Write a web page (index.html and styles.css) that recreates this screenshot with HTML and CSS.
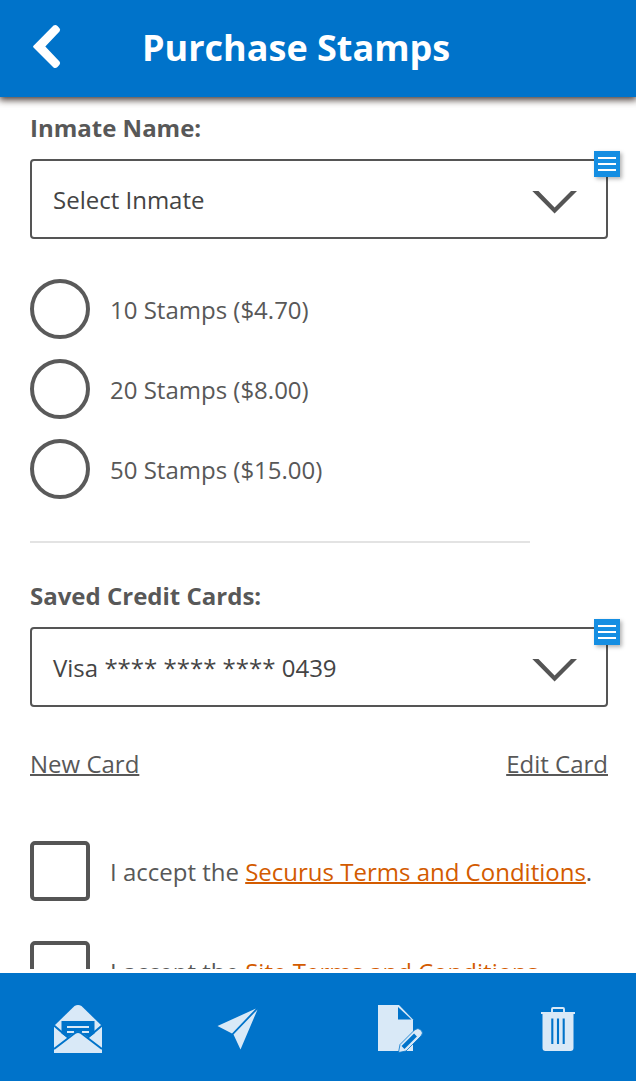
FILE: index.html
```html
<!DOCTYPE html>
<html lang="en">
<head>
<meta charset="utf-8">
<title>Purchase Stamps</title>
<link rel="stylesheet" href="styles.css">
</head>
<body>
<div class="app">
  <header class="header">
    <svg class="back" width="30" height="46" viewBox="0 0 30 46"><path d="M1.500 21.800 21.500 1.600Q23.500 .1 25.500 2L27.500 4.200Q28.800 5.800 27.500 7.400L13.300 22.500 27.500 37.600Q28.800 39.200 27.500 40.800L25.500 43Q23.500 44.900 21.500 43.400L1.500 23.500Q.500 22.700 1.500 21.800Z" fill="#fff"/></svg>
    <h1 class="title">Purchase Stamps</h1>
  </header>
  <main class="content">
    <div class="label">Inmate Name:</div>
    <div class="select">
      <span class="value">Select Inmate</span>
      <svg class="chevron" width="46" height="24" viewBox="0 0 46 24"><path d="M.300 1H6.500L22.600 17.500 39 1H45L22.600 23.500Z" fill="#555"/></svg>
      <span class="badge"><i></i><i></i><i></i></span>
    </div>
    <div class="radios">
      <div class="option"><span class="radio"></span><span class="text">10 Stamps ($4.70)</span></div>
      <div class="option"><span class="radio"></span><span class="text">20 Stamps ($8.00)</span></div>
      <div class="option"><span class="radio"></span><span class="text">50 Stamps ($15.00)</span></div>
    </div>
    <hr class="divider">
    <div class="label">Saved Credit Cards:</div>
    <div class="select">
      <span class="value">Visa **** **** **** 0439</span>
      <svg class="chevron" width="46" height="24" viewBox="0 0 46 24"><path d="M.300 1H6.500L22.600 17.500 39 1H45L22.600 23.500Z" fill="#555"/></svg>
      <span class="badge"><i></i><i></i><i></i></span>
    </div>
    <div class="links"><a class="link">New Card</a><a class="link">Edit Card</a></div>
    <div class="checks">
      <div class="option"><span class="box"></span><span class="text">I accept the <a class="terms">Securus Terms and Conditions</a>.</span></div>
      <div class="option"><span class="box"></span><span class="text">I accept the <a class="terms">Site Terms and Conditions</a>.</span></div>
    </div>
  </main>
  <footer class="tabs">
    <svg width="80" height="80" viewBox="0 0 80 80">
      <path d="M14 36 34.500 16Q38 14 41.500 16L62 36V63H14Z" fill="#d9e9f7"/>
      <path d="M21.500 31H54.500V43.500L48.500 47.500 41 42.300Q38 40.500 35 42.300L27.500 47.500 21.500 43.500Z" fill="#0073ca"/>
      <path d="M27 37H49M27 42H34M42 42H49" stroke="#d9e9f7" stroke-width="2.200"/>
      <path d="M14 59 35 43Q38 41 41 43L62 59M14 35.500 28 47.500M62 35.500 48 47.500" fill="none" stroke="#0073ca" stroke-width="2"/>
    </svg>
    <svg width="80" height="80" viewBox="0 0 80 80"><path d="M12.500 36 51 18.500 27 43.500ZM52.500 19.500 35.500 59.500 28.500 44.500Z" fill="#d9e9f7"/></svg>
    <svg width="80" height="80" viewBox="0 0 80 80">
      <path d="M13 15H34L48 29.500V61H13Z" fill="#d9e9f7"/>
      <path d="M33 17V29.500H46.500Z" fill="#0073ca"/>
      <path d="M33.500 62.500 35 54.500 49.500 40Q53 37 56 40T56 46L41 61Z" fill="#d9e9f7" stroke="#0073ca" stroke-width=".8"/>
      <path d="M38 57.500 50.500 45" stroke="#0073ca" stroke-width="4"/>
    </svg>
    <svg width="70" height="80" viewBox="0 0 70 80">
      <path d="M27 23V19Q27 18 28 18H38Q39 18 39 19V23" fill="none" stroke="#d9e9f7" stroke-width="1.900"/>
      <path d="M16 22H50V24H48.500V58Q48.500 61 45.500 61H20.500Q17.500 61 17.500 58V24H16Z" fill="#d9e9f7"/>
      <path d="M27.300 28.500V54M33 28.500V54M38.700 28.500V54" stroke="#0073ca" stroke-width="2.100"/>
    </svg>
  </footer>
</div>
</body>
</html>
```
FILE: styles.css
```css
* { box-sizing: border-box; }
body { margin: 0; background: #fff; color: #585858; font: 24px/32px "Open Sans", sans-serif; }
.app { display: flex; flex-direction: column; height: 1081px; overflow: hidden; }
.header { display: flex; align-items: center; flex: none; height: 97px; padding-left: 32px; background: #0073ca; color: #fff; box-shadow: 0 2px 7px 1px rgba(40, 25, 20, .85); z-index: 1; }
.back { margin-right: 80px; margin-top: -3px; }
.title { margin: -2px 0 0; font-size: 36px; line-height: 48px; font-weight: 700; }
.content { flex: none; height: 872px; padding: 15px 28px 0 30px; overflow: hidden; }
.label { font-weight: 700; }
.select { position: relative; display: flex; align-items: center; justify-content: space-between; height: 80px; margin-top: 15px; padding: 2px 28px 0 21px; border: 2px solid #555; border-radius: 4px; }
.value { color: #444; }
.chevron { margin-top: 4px; }
.badge { position: absolute; right: -14px; top: -10px; width: 26px; height: 26px; padding: 6px 4px; display: flex; flex-direction: column; gap: 4px; background: #158ee2; box-shadow: 2px 2px 4px rgba(0, 0, 0, .3); }
.badge i { height: 2px; background: #fff; }
.radios { display: flex; flex-direction: column; gap: 20px; margin-top: 40px; }
.option { display: flex; align-items: center; gap: 20px; height: 60px; }
.radio { width: 60px; height: 60px; border: 4px solid #5a5a5a; border-radius: 50%; }
.text { padding-top: 2px; }
.divider { width: 500px; height: 2px; margin: 42px 0 37px; border: 0; background: #e3e3e3; }
.links { display: flex; justify-content: space-between; margin-top: 41px; }
.link, .terms { text-decoration: underline; text-decoration-thickness: 2px; }
.terms { color: #d35b00; }
.checks { display: flex; flex-direction: column; gap: 40px; margin-top: 61px; }
.box { width: 60px; height: 60px; border: 4px solid #555; border-radius: 5px; }
.tabs { display: grid; grid-template-columns: 165px 160px 160px 70px; flex: none; height: 108px; margin-top: 4px; padding: 17px 0 0 40px; background: #0073ca; }
```
